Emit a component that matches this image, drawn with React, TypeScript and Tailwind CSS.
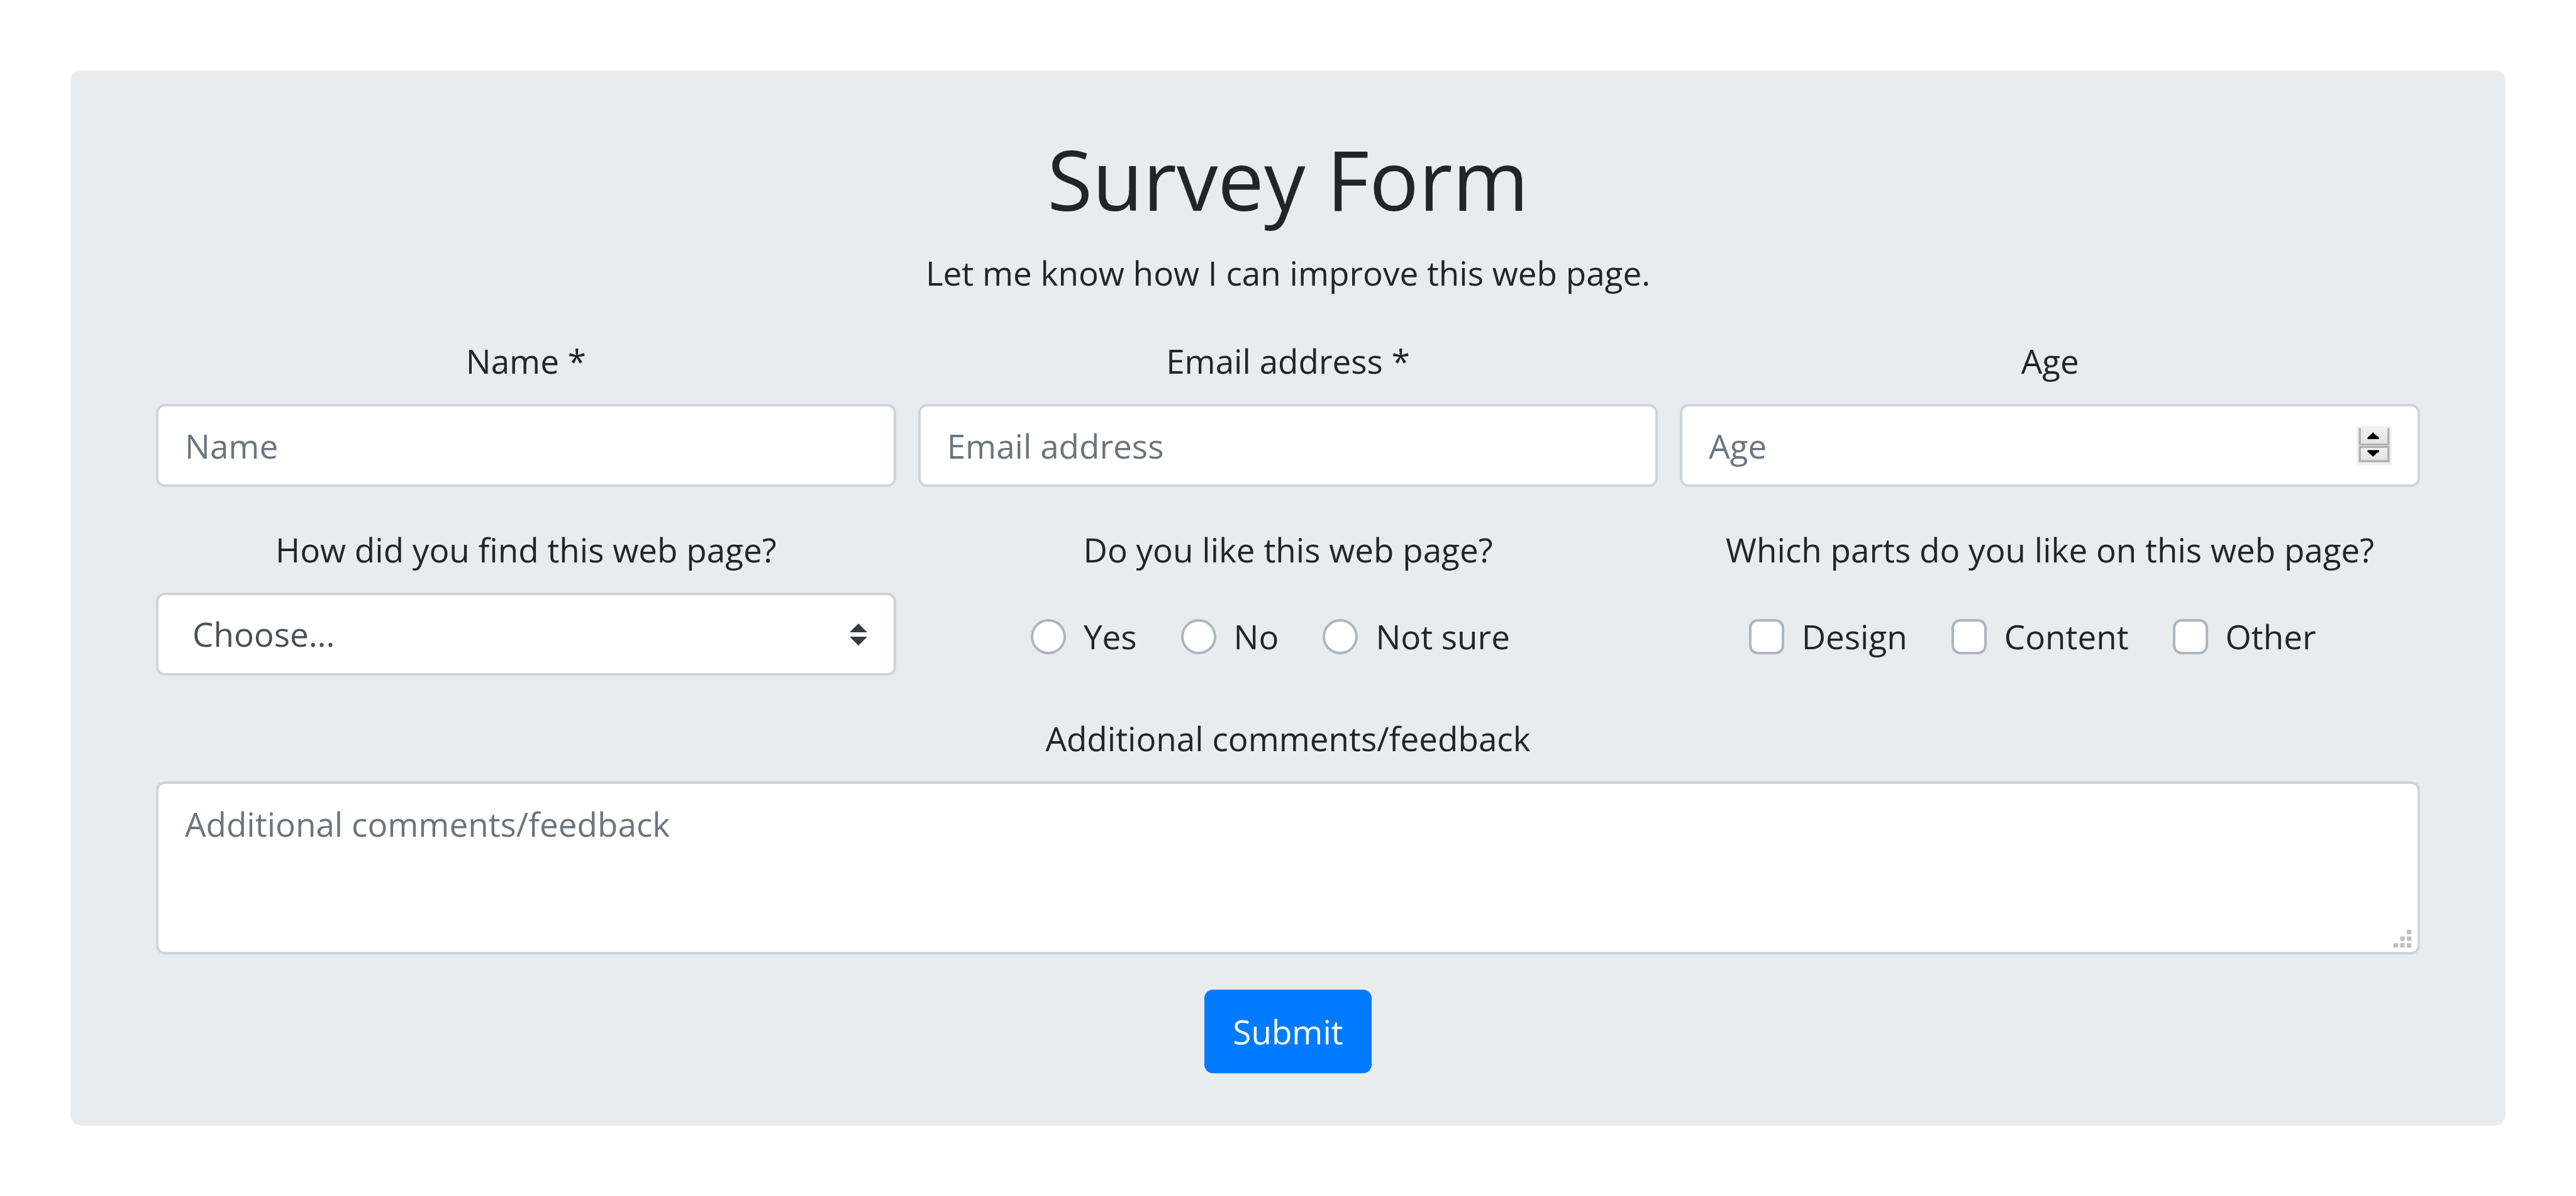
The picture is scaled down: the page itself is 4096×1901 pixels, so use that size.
import type { ReactNode } from 'react'

const field =
  'block w-full rounded-[14px] border-[4px] border-[#ced4da] bg-white text-[53px] leading-[80px] text-[#495057] placeholder:text-[#6c757d] placeholder:opacity-100 focus:outline-none focus:border-[#80bdff]'

function Field({ id, label, children }: { id: string; label: string; children: ReactNode }) {
  return (
    <div className="min-w-0">
      <label htmlFor={id} className="mb-[24px] block text-center leading-[88px]">
        {label}
      </label>
      <div className="relative">{children}</div>
    </div>
  )
}

function Choices({
  legend,
  type,
  name,
  options,
}: {
  legend: string
  type: 'radio' | 'checkbox'
  name: string
  options: string[]
}) {
  const shape = type === 'radio' ? 'rounded-full' : 'rounded-[14px]'
  return (
    <fieldset className="min-w-0">
      <legend className="mb-[24px] block w-full text-center leading-[88px]">{legend}</legend>
      <div className="flex h-[132px] items-center justify-center gap-[70px] pt-[8px] pr-[56px]">
        {options.map((option) => (
          <label key={option} className="flex items-center gap-[28px] leading-[80px]">
            <input
              type={type}
              name={name}
              value={option}
              className={`size-[56px] shrink-0 appearance-none border-[4px] border-[#adb5bd] bg-white checked:bg-[#007bff] ${shape}`}
            />
            {option}
          </label>
        ))}
      </div>
    </fieldset>
  )
}

function Spinner() {
  return (
    <svg
      aria-hidden="true"
      viewBox="0 0 64 72"
      className="pointer-events-none absolute top-[35px] right-[45px] h-[63px] w-[56px]"
    >
      <defs>
        <linearGradient id="spin-face" x1="0" y1="0" x2="0" y2="1">
          <stop offset="0" stopColor="#f1f1f1" />
          <stop offset="1" stopColor="#e2e2e2" />
        </linearGradient>
      </defs>
      <rect width="64" height="72" fill="#f1f1f1" />
      <rect x="8" y="0" width="48" height="34" fill="url(#spin-face)" />
      <rect x="8" y="38" width="48" height="28" fill="url(#spin-face)" />
      <path d="M6 4V34H58V4" fill="none" stroke="#b0b0b0" strokeWidth="4" />
      <rect x="6" y="38" width="52" height="26" fill="none" stroke="#b0b0b0" strokeWidth="4" />
      <path d="M0 35.5H64" stroke="#e4e4e4" strokeWidth="1" />
      <path d="M30 11L27 15L24 17L20 21V24H41V21L36 17L33 15Z" fill="#000" />
      <path d="M30 56L27 53L24 50L20 47V44H41V47L36 50L33 53Z" fill="#000" />
    </svg>
  )
}

function SelectArrows() {
  return (
    <svg
      aria-hidden="true"
      viewBox="0 0 4 5"
      className="pointer-events-none absolute top-[49px] right-[46px] h-[35px] w-[28px]"
    >
      <path fill="#343a40" d="M2 0L0 2h4zm0 5L0 3h4z" />
    </svg>
  )
}

function ResizeGrip() {
  const dots = [
    [24, 0],
    [12, 12],
    [24, 12],
    [0, 24],
    [12, 24],
    [24, 24],
  ]
  return (
    <svg
      aria-hidden="true"
      viewBox="0 0 34 34"
      className="pointer-events-none absolute right-[13px] bottom-[10px] size-[30px]"
    >
      {dots.map(([x, y]) => (
        <rect key={`${x}-${y}`} x={x + 1} y={y + 1} width="8" height="8" fill="#c0c0c0" />
      ))}
    </svg>
  )
}

export default function App() {
  return (
    <main className="bg-white p-[112px] font-['Open_Sans','Noto_Sans',sans-serif] text-[53px] text-[#212529]">
      <section className="rounded-[17px] bg-[#e9ecef] px-[136px] pt-[89px] pb-[83px]">
        <h1 className="mb-[22px] text-center text-[131px] leading-[167px] font-normal">Survey Form</h1>
        <p className="mb-[52px] text-center leading-[88px]">Let me know how I can improve this web page.</p>
        <form onSubmit={(e) => e.preventDefault()}>
          <div className="grid grid-cols-3 gap-x-[35px] gap-y-[56px]">
            <Field id="name" label="Name *">
              <input id="name" type="text" placeholder="Name" required className={`${field} h-[132px] px-[42px]`} />
            </Field>
            <Field id="email" label="Email address *">
              <input
                id="email"
                type="email"
                placeholder="Email address"
                required
                className={`${field} h-[132px] px-[42px]`}
              />
            </Field>
            <Field id="age" label="Age">
              <input
                id="age"
                type="number"
                placeholder="Age"
                className={`${field} h-[132px] px-[42px] [appearance:textfield]`}
              />
              <Spinner />
            </Field>
            <Field id="source" label="How did you find this web page?">
              <select id="source" defaultValue="" className={`${field} h-[132px] appearance-none pr-[98px] pl-[54px]`}>
                <option value="">Choose...</option>
                <option value="search">Search engine</option>
                <option value="friend">Friend</option>
              </select>
              <SelectArrows />
            </Field>
            <Choices
              legend="Do you like this web page?"
              type="radio"
              name="like"
              options={['Yes', 'No', 'Not sure']}
            />
            <Choices
              legend="Which parts do you like on this web page?"
              type="checkbox"
              name="parts"
              options={['Design', 'Content', 'Other']}
            />
            <div className="col-span-3">
              <Field id="comments" label="Additional comments/feedback">
                <textarea
                  id="comments"
                  placeholder="Additional comments/feedback"
                  className={`${field} h-[275px] resize-none px-[42px] py-[24px]`}
                />
                <ResizeGrip />
              </Field>
            </div>
          </div>
          <div className="mt-[56px] flex justify-center">
            <button
              type="submit"
              className="h-[133px] rounded-[14px] bg-[#007bff] px-[45px] leading-[84px] text-white"
            >
              Submit
            </button>
          </div>
        </form>
      </section>
    </main>
  )
}
